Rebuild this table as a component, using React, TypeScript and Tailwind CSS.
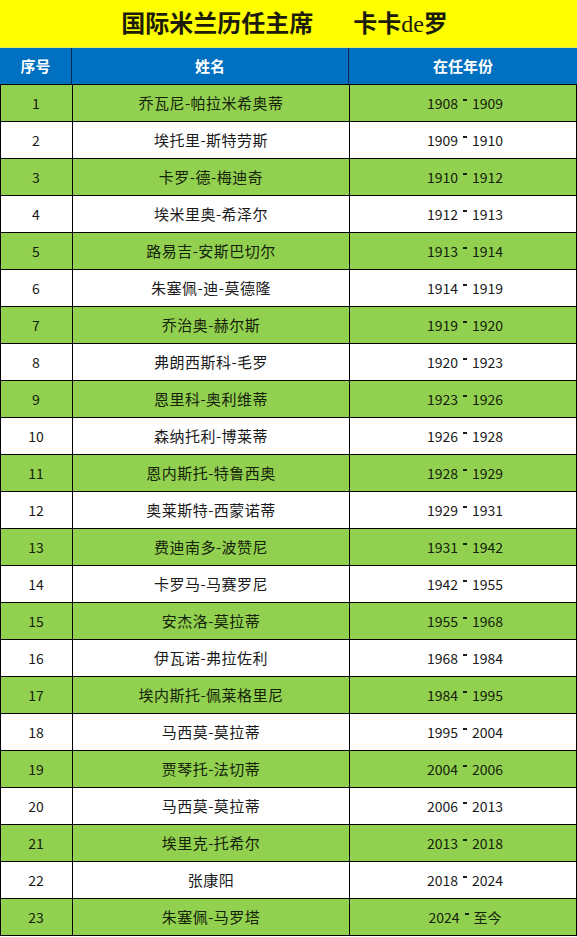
import React from "react";

const ROWS: [string, string, string][] = [
  ["乔瓦尼-帕拉米希奥蒂", "1908", "1909"],
  ["埃托里-斯特劳斯", "1909", "1910"],
  ["卡罗-德-梅迪奇", "1910", "1912"],
  ["埃米里奥-希泽尔", "1912", "1913"],
  ["路易吉-安斯巴切尔", "1913", "1914"],
  ["朱塞佩-迪-莫德隆", "1914", "1919"],
  ["乔治奥-赫尔斯", "1919", "1920"],
  ["弗朗西斯科-毛罗", "1920", "1923"],
  ["恩里科-奥利维蒂", "1923", "1926"],
  ["森纳托利-博莱蒂", "1926", "1928"],
  ["恩内斯托-特鲁西奥", "1928", "1929"],
  ["奥莱斯特-西蒙诺蒂", "1929", "1931"],
  ["费迪南多-波赞尼", "1931", "1942"],
  ["卡罗马-马赛罗尼", "1942", "1955"],
  ["安杰洛-莫拉蒂", "1955", "1968"],
  ["伊瓦诺-弗拉佐利", "1968", "1984"],
  ["埃内斯托-佩莱格里尼", "1984", "1995"],
  ["马西莫-莫拉蒂", "1995", "2004"],
  ["贾琴托-法切蒂", "2004", "2006"],
  ["马西莫-莫拉蒂", "2006", "2013"],
  ["埃里克-托希尔", "2013", "2018"],
  ["张康阳", "2018", "2024"],
  ["朱塞佩-马罗塔", "2024", "至今"],
];

const cell = "flex items-center justify-center border-r border-black";

export default function App() {
  return (
    <div className="w-[577px] h-[937px] bg-white overflow-hidden font-['Noto_Sans_CJK_SC',sans-serif]">
      <div className="h-[48px] bg-[#ffff00] flex items-center justify-center border-b border-[#e8e85a]">
        <h1 className="text-[24px] font-semibold text-[#1c1c08] pr-[8px] font-['Liberation_Serif','Noto_Sans_CJK_SC',serif]">
          国际米兰历任主席<span className="inline-block w-[40px]" />卡卡<span className="font-normal">de</span>罗
        </h1>
      </div>

      <div className="grid grid-cols-[72px_277px_1fr] h-[37px] bg-[#0070c0] border-b border-black text-white font-bold text-[15px]">
        <div className="flex items-center justify-center border-r border-[#0a2a55]">序号</div>
        <div className="flex items-center justify-center border-r border-[#0a2a55]">姓名</div>
        <div className="flex items-center justify-center">在任年份</div>
      </div>

      {ROWS.map(([name, from, to], i) => (
        <div
          key={i}
          className={
            "grid grid-cols-[72px_277px_1fr] h-[37px] border-b border-l border-r border-black text-[15px] " +
            (i % 2 === 0 ? "bg-[#92d050] text-[#14220a]" : "bg-white text-[#1a1a1a]")
          }
        >
          <div className={cell + " -ml-px"}>
            <span className="text-[14px]">{i + 1}</span>
          </div>
          <div className={cell}>
            <span className="tracking-[0.5px]">{name}</span>
          </div>
          <div className="flex items-center justify-center text-[14px]">
            <span className="pl-[4px]">{from}</span>
            <span className="inline-block w-[4px] h-[1.5px] bg-current mx-[5px] -translate-y-[3px]" />
            <span>{to}</span>
          </div>
        </div>
      ))}
    </div>
  );
}
